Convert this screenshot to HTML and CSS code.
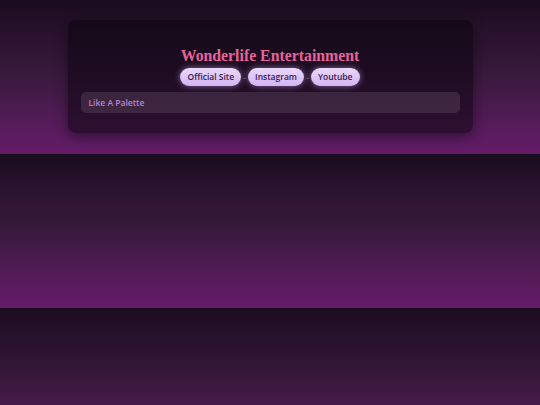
FILE: index.html
```html
<!DOCTYPE html>
<html>
<head>
<meta charset="utf-8">
<link rel="stylesheet" href="styles.css">
</head>
<body>
<div class="card">
  <h1 class="title">Wonderlife Entertainment</h1>
  <div class="links">
    <a class="pill">Official Site</a><span class="sep">-</span><a class="pill">Instagram</a><span class="sep">-</span><a class="pill">Youtube</a>
  </div>
  <div class="palette">Like A Palette</div>
</div>
</body>
</html>
```
FILE: styles.css
```css
html, body {
  margin: 0;
}
body {
  padding: 20px 0 21px;
  background: linear-gradient(to bottom, #1b0c1f 0%, #3a1a3e 50%, #661c6a 100%);
  font-family: "Open Sans", "Liberation Sans", sans-serif;
}
.card {
  width: 75%;
  margin: 0 auto;
  box-sizing: border-box;
  padding: 26px 13px 20px;
  background: rgba(10, 4, 12, 0.55);
  border-radius: 8px;
  box-shadow: 0 4px 14px rgba(0, 0, 0, 0.45);
}
.title {
  margin: 0;
  text-align: center;
  font-family: "Liberation Serif", "DejaVu Serif", serif;
  font-weight: bold;
  font-size: 15.8px;
  line-height: 20px;
  color: #e8639c;
}
.links {
  display: flex;
  justify-content: center;
  align-items: center;
  margin-top: 2px;
}
.pill {
  display: block;
  height: 18px;
  line-height: 18px;
  padding: 0 7px;
  border-radius: 9px;
  background: linear-gradient(to bottom, #ead8fb, #d2b4f3);
  color: #3a1a4e;
  font-size: 8.5px;
  font-weight: 600;
  box-shadow: 0 0 6px rgba(220, 180, 255, 0.55);
}
.sep {
  width: 7px;
  text-align: center;
  color: #9a8aa0;
  font-size: 8px;
  line-height: 18px;
}
.palette {
  margin-top: 6px;
  height: 21px;
  line-height: 21px;
  padding: 0 8px;
  border-radius: 5px;
  background: rgba(255, 255, 255, 0.1);
  color: #b781d8;
  font-size: 8.5px;
  font-weight: 600;
}
```
